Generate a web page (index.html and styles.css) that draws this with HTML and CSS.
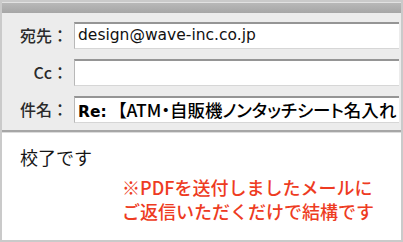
FILE: index.html
```html
<!DOCTYPE html>
<html>
	<head>
		<meta charset="utf-8">
		<title>校了メール</title>
		<link rel="stylesheet" href="styles.css">
	</head>
	<body>
		<div class="mail">
			<div class="mail_head">
				<div class="bar"></div>
				<div class="rows">
					<p class="lab">宛先：</p>
					<div class="field addr">design@wave-inc.co.jp</div>
					<p class="lab">Cc：</p>
					<div class="field"></div>
					<p class="lab">件名：</p>
					<div class="field subj"><span class="re">Re:</span>【ATM・自販機ノンタッチシート名入れ</div>
				</div>
			</div>
			<div class="mail_body">
				<p class="txt">校了です</p>
				<p class="note">※PDFを送付しましたメールに<br>ご返信いただくだけで結構です</p>
			</div>
		</div>
	</body>
</html>
```

FILE: styles.css
```css
* {
	margin: 0;
	padding: 0;
	box-sizing: border-box;
}

html,body{
	width: 403px;
	height: 242px;
	overflow: hidden;
	background: #fff;
	font-family: "Noto Sans CJK JP", "DejaVu Sans", sans-serif;
}

.mail{
	width: 403px;
	height: 242px;
	border: 2px solid #cacaca;
	overflow: hidden;
}

.mail_head{
	background-color: #ececec;
	border-bottom: 2px solid #a6a6a6;
	box-shadow: 0 1px 0 #dcdcdc;
}

.bar{
	height: 11px;
	border-top: 1px solid #e2e2e2;
	background-image: linear-gradient(to bottom, #b8b8b8 0%, #a6a6a6 100%);
}

.rows{
	display: grid;
	grid-template-columns: 66px 1fr;
	column-gap: 6px;
	row-gap: 10px;
	padding: 9px 2px 7px 0;
}

.lab{
	text-align: right;
	font-size: 16px;
	line-height: 27px;
	font-weight: 500;
	color: #2a2a2a;
}

.field{
	height: 27px;
	background-color: #fff;
	border-top: 2px solid #959595;
	border-left: 1px solid #b8b8b8;
	border-bottom: 1px solid #d6d6d6;
	padding-left: 3px;
	white-space: nowrap;
	overflow: hidden;
	color: #111;
}

.addr{
	font-family: "DejaVu Sans", sans-serif;
	font-size: 15.5px;
	line-height: 23px;
}

.subj{
	font-size: 17.5px;
	line-height: 23px;
	font-weight: 500;
	color: #000;
	font-feature-settings: "palt";
}

.re{
	font-family: "DejaVu Sans", sans-serif;
	font-weight: 700;
	font-size: 15.5px;
	margin-right: 11px;
}

.mail_body{
	padding: 13px 0 0 18px;
}

.txt{
	font-size: 18px;
	line-height: 24px;
	color: #151515;
}

.note{
	margin: 6px 0 0 102px;
	font-size: 18px;
	line-height: 24px;
	font-weight: 500;
	color: #ee3b22;
	white-space: nowrap;
}
```
